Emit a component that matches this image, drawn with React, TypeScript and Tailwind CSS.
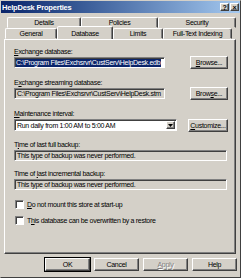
const raised = "border border-t-white border-l-white border-r-[#404040] border-b-[#404040] shadow-[inset_-1px_-1px_0_#808080]"
const sunken = "border border-t-[#808080] border-l-[#808080] border-r-white border-b-white shadow-[inset_1px_1px_0_#404040]"

const U = ({ children }: { children: string }) => <span className="underline underline-offset-[1px]">{children}</span>

const Btn = ({ children, def, disabled, w = "w-[38px]" }: { children: React.ReactNode, def?: boolean, disabled?: boolean, w?: string }) => (
  <div className={`${w} h-[13px] ${def ? "outline outline-1 outline-black" : ""} ${raised} bg-[#d4d0c8] flex items-center justify-center ${disabled ? "text-[#808080] [text-shadow:1px_1px_0_#fff]" : "text-black"}`}>
    {children}
  </div>
)

const Tab = ({ label, w, active }: { label: string, w: string, active?: boolean }) => (
  <div className={`${w} ${active ? "h-[13px] -mt-[2px] z-10 border-b-0 bg-[#d4d0c8]" : "h-[11px]"} border border-t-white border-l-white border-r-[#404040] border-b-transparent shadow-[inset_-1px_0_0_#808080] rounded-t-[2px] flex items-center justify-center`}>
    {label}
  </div>
)

const Check = ({ children }: { children: React.ReactNode }) => (
  <div className="flex items-center h-[10px]">
    <div className={`w-[9px] h-[9px] bg-white ${sunken} ml-[1px] mr-[3px]`} />
    <span>{children}</span>
  </div>
)

const App = () => {
  return (
    <div className="w-[241px] h-[278px] bg-[#d4d0c8] overflow-hidden whitespace-nowrap text-[7px] tracking-[-0.3px] leading-[9px] text-black font-['Liberation_Sans',Arial,sans-serif] flex flex-col border border-t-[#d4d0c8] border-l-[#d4d0c8] border-r-[#404040] border-b-[#404040]">
      {/* title bar */}
      <div className="h-[12px] flex items-center justify-between bg-gradient-to-r from-[#0a246a] to-[#a6caf0] pl-[1px] pr-[1px]">
        <span className="text-white font-bold text-[7.5px] tracking-[-0.2px]">HelpDesk Properties</span>
        <div className="flex gap-[1px]">
          <div className={`w-[9px] h-[8px] bg-[#d4d0c8] ${raised} flex items-center justify-center text-[7px] font-bold leading-none`}>?</div>
          <div className={`w-[9px] h-[8px] bg-[#d4d0c8] ${raised} flex items-center justify-center text-[7px] font-bold leading-none`}>×</div>
        </div>
      </div>

      {/* tabs */}
      <div className="mt-[4px] flex flex-col">
        <div className="flex pl-[6px]">
          <Tab label="Details" w="w-[74px]" />
          <Tab label="Policies" w="w-[77px]" />
          <Tab label="Security" w="w-[78px]" />
        </div>
        <div className="flex pl-[4px]">
          <Tab label="General" w="w-[52px]" />
          <Tab label="Database" w="w-[56px]" active />
          <Tab label="Limits" w="w-[50px]" />
          <Tab label="Full-Text Indexing" w="w-[69px]" />
        </div>
      </div>

      {/* panel */}
      <div className="mx-[3px] w-[232px] h-[215px] border border-t-white border-l-white border-r-[#404040] border-b-[#404040] shadow-[inset_-1px_-1px_0_#808080] pl-[9px] pr-[7px] flex flex-col">
        <div className="mt-[7px]"><U>E</U>xchange database:</div>
        <div className="flex items-center justify-between h-[13px]">
          <div className={`w-[151px] h-[11px] bg-white ${sunken} flex items-center px-[1px] overflow-hidden`}>
            <span className="bg-[#0a246a] text-white leading-[8px] pr-[1px]">C:\Program Files\Exchsrvr\CustServ\HelpDesk.edb</span>
          </div>
          <Btn><U>B</U>rowse...</Btn>
        </div>

        <div className="mt-[9px]">E<U>x</U>change streaming database:</div>
        <div className="flex items-center justify-between h-[13px]">
          <div className={`w-[151px] h-[11px] bg-[#d4d0c8] ${sunken} flex items-center px-[2px] overflow-hidden`}>
            C:\Program Files\Exchsrvr\CustServ\HelpDesk.stm
          </div>
          <Btn>Brow<U>s</U>e...</Btn>
        </div>

        <div className="mt-[9px]"><U>M</U>aintenance interval:</div>
        <div className="flex items-center justify-between h-[14px]">
          <div className={`w-[163px] h-[12px] bg-white ${sunken} flex items-center justify-between pl-[2px] pr-[1px]`}>
            <span>Run daily from 1:00 AM to 5:00 AM</span>
            <div className={`w-[9px] h-[8px] bg-[#d4d0c8] ${raised} flex items-center justify-center`}>
              <svg width="5" height="3" viewBox="0 0 5 3"><path d="M0 0h5L2.5 3z" fill="#000" /></svg>
            </div>
          </div>
          <Btn w="w-[40px]"><U>C</U>ustomize...</Btn>
        </div>

        <div className="mt-[8px]">T<U>i</U>me of last full backup:</div>
        <div className={`mt-[1px] w-[213px] h-[11px] bg-[#d4d0c8] ${sunken} flex items-center px-[2px]`}>
          This type of backup was never performed.
        </div>

        <div className="mt-[8px]">Time of <U>l</U>ast incremental backup:</div>
        <div className={`mt-[1px] w-[213px] h-[11px] bg-[#d4d0c8] ${sunken} flex items-center px-[2px]`}>
          This type of backup was never performed.
        </div>

        <div className="mt-[9px]"><Check><U>D</U>o not mount this store at start-up</Check></div>
        <div className="mt-[6px]"><Check>T<U>h</U>is database can be overwritten by a restore</Check></div>
      </div>

      {/* buttons */}
      <div className="mt-[4px] flex justify-end gap-[4px] pr-[3px]">
        <Btn def w="w-[45px]">OK</Btn>
        <Btn w="w-[45px]">Cancel</Btn>
        <Btn disabled w="w-[45px]"><U>A</U>pply</Btn>
        <Btn w="w-[45px]">Help</Btn>
      </div>
    </div>
  )
}

export default App
